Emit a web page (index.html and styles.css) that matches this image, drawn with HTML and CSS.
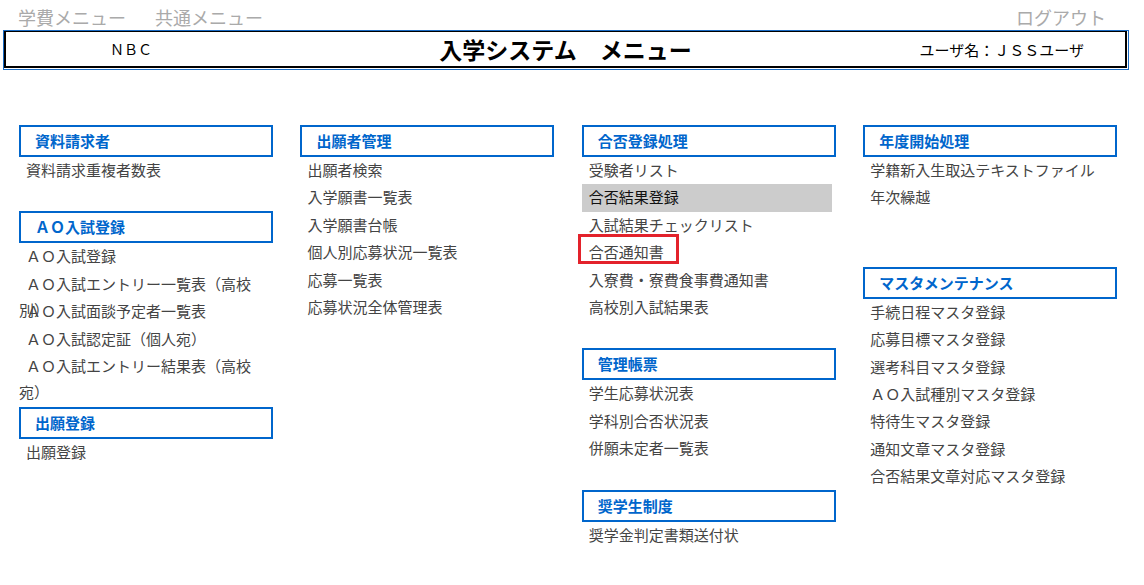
FILE: index.html
```html
<!DOCTYPE html>
<html lang="ja">
<head>
    <meta charset="UTF-8">
    <title>入学システム メニュー</title>
    <link rel="stylesheet" href="styles.css">
</head>
<body>
    <div class="top-nav">
        <div class="top-links">
            <a href="#">学費メニュー</a>
            <a href="#">共通メニュー</a>
        </div>
        <a href="#" class="logout">ログアウト</a>
    </div>

    <div class="header-frame">
        <div class="header">
            <div class="org">ＮＢＣ</div>
            <div class="title">入学システム　メニュー</div>
            <div class="user">ユーザ名：ＪＳＳユーザ</div>
        </div>
    </div>

    <div class="menu-grid">
        <div class="menu-col">
            <div class="section">
                <div class="section-title">資料請求者</div>
                <a class="item" href="#">資料請求重複者数表</a>
            </div>
            <div class="section">
                <div class="section-title">ＡＯ入試登録</div>
                <a class="item" href="#">ＡＯ入試登録</a>
                <a class="item" href="#">ＡＯ入試エントリー一覧表（高校別）</a>
                <a class="item" href="#">ＡＯ入試面談予定者一覧表</a>
                <a class="item" href="#">ＡＯ入試認定証（個人宛）</a>
                <a class="item" href="#">ＡＯ入試エントリー結果表（高校宛）</a>
            </div>
            <div class="section">
                <div class="section-title">出願登録</div>
                <a class="item" href="#">出願登録</a>
            </div>
        </div>

        <div class="menu-col">
            <div class="section">
                <div class="section-title">出願者管理</div>
                <a class="item" href="#">出願者検索</a>
                <a class="item" href="#">入学願書一覧表</a>
                <a class="item" href="#">入学願書台帳</a>
                <a class="item" href="#">個人別応募状況一覧表</a>
                <a class="item" href="#">応募一覧表</a>
                <a class="item" href="#">応募状況全体管理表</a>
            </div>
        </div>

        <div class="menu-col">
            <div class="section">
                <div class="section-title">合否登録処理</div>
                <a class="item" href="#">受験者リスト</a>
                <a class="item selected" href="#">合否結果登録</a>
                <a class="item" href="#">入試結果チェックリスト</a>
                <a class="item marked" href="#">合否通知書</a>
                <a class="item" href="#">入寮費・寮費食事費通知書</a>
                <a class="item" href="#">高校別入試結果表</a>
            </div>
            <div class="section">
                <div class="section-title">管理帳票</div>
                <a class="item" href="#">学生応募状況表</a>
                <a class="item" href="#">学科別合否状況表</a>
                <a class="item" href="#">併願未定者一覧表</a>
            </div>
            <div class="section">
                <div class="section-title">奨学生制度</div>
                <a class="item" href="#">奨学金判定書類送付状</a>
            </div>
        </div>

        <div class="menu-col">
            <div class="section spaced">
                <div class="section-title">年度開始処理</div>
                <a class="item" href="#">学籍新入生取込テキストファイル</a>
                <a class="item" href="#">年次繰越</a>
            </div>
            <div class="section">
                <div class="section-title">マスタメンテナンス</div>
                <a class="item" href="#">手続日程マスタ登録</a>
                <a class="item" href="#">応募目標マスタ登録</a>
                <a class="item" href="#">選考科目マスタ登録</a>
                <a class="item" href="#">ＡＯ入試種別マスタ登録</a>
                <a class="item" href="#">特待生マスタ登録</a>
                <a class="item" href="#">通知文章マスタ登録</a>
                <a class="item" href="#">合否結果文章対応マスタ登録</a>
            </div>
        </div>
    </div>
</body>
</html>
```

FILE: styles.css
```css
body {
    margin: 0;
    font-family: "Noto Sans CJK JP", "Noto Sans", sans-serif;
    color: #333;
    background: #fff;
}
a {
    text-decoration: none;
}
.top-nav {
    display: flex;
    justify-content: space-between;
    height: 26px;
    padding: 4px 38px 0 18px;
    line-height: 26px;
    font-size: 18px;
}
.top-nav a {
    color: #aaa;
}
.top-links {
    display: flex;
    gap: 29px;
}
.header-frame {
    width: 1123px;
    margin-left: 3px;
    border: 1px solid #1a6bc4;
    padding: 0 1px 1px 0;
}
.header {
    display: grid;
    grid-template-columns: 250px 1fr 250px;
    align-items: center;
    height: 34px;
    border: 2px solid #000;
    border-top-width: 1px;
    color: #000;
}
.org {
    text-align: center;
    font-size: 14px;
}
.title {
    text-align: center;
    font-size: 23px;
    font-weight: bold;
}
.user {
    text-align: right;
    padding-right: 41px;
    font-size: 15px;
}
.menu-grid {
    display: grid;
    grid-template-columns: repeat(4, 254px);
    column-gap: 27.4px;
    padding: 55px 0 0 19px;
}
.menu-col {
    display: flex;
    flex-direction: column;
}
.section {
    margin-bottom: 27px;
}
.section.spaced {
    margin-bottom: 55px;
}
.section-title {
    height: 28px;
    line-height: 27px;
    border: 2px solid #0066cc;
    padding-left: 14px;
    font-size: 15px;
    font-weight: bold;
    color: #0066cc;
}
.item {
    display: block;
    position: relative;
    width: 250px;
    height: 27.4px;
    line-height: 26.4px;
    padding-bottom: 1px;
    box-sizing: border-box;
    text-indent: 7px;
    font-size: 15px;
    color: #444;
}
.item.selected {
    background: #cccccc;
    color: #111;
}
.item.marked::after {
    content: "";
    position: absolute;
    left: -4px;
    top: -5px;
    width: 101px;
    height: 30px;
    border: 3px solid #e3222b;
    box-sizing: border-box;
}
```
